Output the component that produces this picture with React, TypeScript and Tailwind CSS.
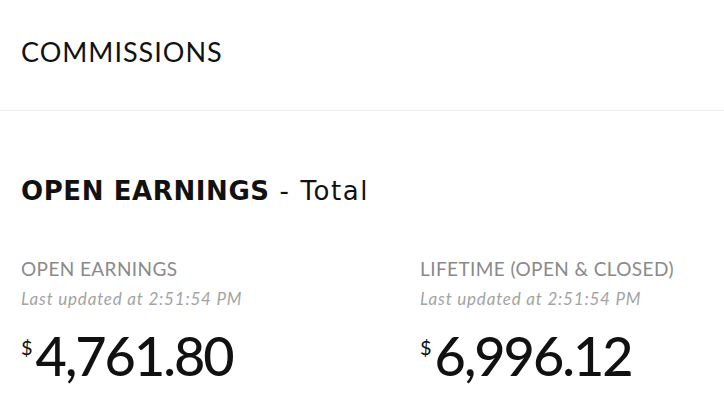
interface Stat {
  label: string;
  updated: string;
  amount: string;
}

const stats: Stat[] = [
  { label: 'OPEN EARNINGS', updated: 'Last updated at 2:51:54 PM', amount: '4,761.80' },
  { label: 'LIFETIME (OPEN & CLOSED)', updated: 'Last updated at 2:51:54 PM', amount: '6,996.12' },
];

function StatBlock({ stat }: { stat: Stat }) {
  return (
    <div className="flex flex-col">
      <div className="text-[19px] leading-none tracking-[0.4px] text-[#8a8a8a] whitespace-nowrap">{stat.label}</div>
      <div className="text-[17px] leading-none italic tracking-[0.8px] text-[#a3a3a3] mt-[12px] whitespace-nowrap">
        {stat.updated}
      </div>
      <div className="flex items-start mt-[22px]">
        <span className="text-[20px] leading-none mt-[8px] mr-[3px]">$</span>
        <span className="text-[54px] leading-none font-medium tracking-[-2px]">{stat.amount}</span>
      </div>
    </div>
  );
}

export default function App() {
  return (
    <div className="min-h-screen bg-white text-[#111]" style={{ fontFamily: 'Lato, "Noto Sans", sans-serif' }}>
      <header className="h-[111px] border-b border-[#ececec] px-[21px] pt-[38px]">
        <h1 className="text-[27px] leading-none tracking-[1px]">COMMISSIONS</h1>
      </header>

      <section className="px-[21px] pt-[67px]">
        {/* wider face here: the heading's caps run much wider than Lato's */}
        <h2
          className="text-[26px] leading-none whitespace-nowrap"
          style={{ fontFamily: '"DejaVu Sans", sans-serif' }}
        >
          <span className="font-bold tracking-[0.6px]">OPEN EARNINGS</span>
          <span className="tracking-[1.6px]"> - Total</span>
        </h2>

        <div className="grid grid-cols-[399px_1fr] mt-[55px]">
          {stats.map((s) => (
            <StatBlock key={s.label} stat={s} />
          ))}
        </div>
      </section>
    </div>
  );
}
